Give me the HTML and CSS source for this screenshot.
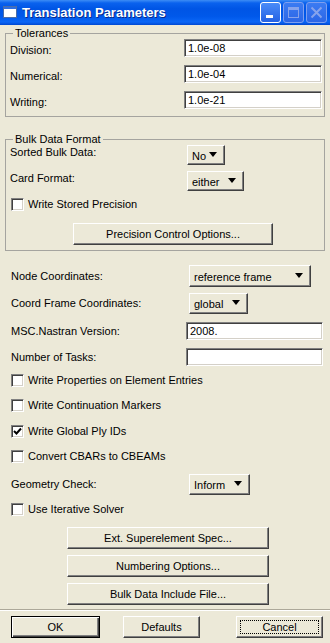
FILE: index.html
```html
<!DOCTYPE html>
<html lang="en">
<head>
    <meta charset="UTF-8">
    <meta name="viewport" content="width=device-width, initial-scale=1.0">
    <title>Translation Parameters</title>
    <link rel="stylesheet" href="styles.css">
</head>
<body>
    <div class="titlebar">
        <svg class="app-icon" width="14" height="12" viewBox="0 0 14 12">
            <rect x="0.5" y="0.5" width="13" height="11" fill="#fff" stroke="#4b6da8"/>
            <rect x="1" y="1" width="12" height="2" fill="#2f6fe0"/>
        </svg>
        <div class="title">Translation Parameters</div>
        <div class="tb-btn min"><span></span></div>
        <div class="tb-btn off">
            <svg width="19" height="19" viewBox="0 0 19 19"><rect x="4.5" y="4.5" width="10" height="10" fill="none" stroke="#86a3ec"/><rect x="5" y="5" width="9" height="2" fill="#86a3ec"/></svg>
        </div>
        <div class="tb-btn off">
            <svg width="19" height="19" viewBox="0 0 19 19"><path d="M4.5 4.5 L14.5 14.5 M14.5 4.5 L4.5 14.5" stroke="#86a3ec" stroke-width="2"/></svg>
        </div>
    </div>

    <fieldset class="group tol">
        <legend>Tolerances</legend>
        <div class="rows">
            <div class="row"><span class="label low">Division:</span><div class="field">1.0e-08</div></div>
            <div class="row"><span class="label low">Numerical:</span><div class="field">1.0e-04</div></div>
            <div class="row"><span class="label low">Writing:</span><div class="field">1.0e-21</div></div>
        </div>
    </fieldset>

    <fieldset class="group bulk">
        <legend>Bulk Data Format</legend>
        <div class="row dd-row"><span class="label high">Sorted Bulk Data:</span><div class="dd w-no">No<i></i></div></div>
        <div class="row dd-row"><span class="label high">Card Format:</span><div class="dd w-either">either<i></i></div></div>
        <div class="row check-row"><div class="check"></div><span>Write Stored Precision</span></div>
        <div class="btn precision">Precision Control Options...</div>
    </fieldset>

    <div class="main">
        <div class="row node"><span class="label">Node Coordinates:</span><div class="dd w-ref">reference frame<i></i></div></div>
        <div class="row coord"><span class="label">Coord Frame Coordinates:</span><div class="dd w-global">global<i></i></div></div>
        <div class="row text-row"><span class="label">MSC.Nastran Version:</span><div class="field">2008.</div></div>
        <div class="row text-row"><span class="label">Number of Tasks:</span><div class="field"></div></div>
        <div class="row check-row c1"><div class="check"></div><span>Write Properties on Element Entries</span></div>
        <div class="row check-row c2"><div class="check"></div><span>Write Continuation Markers</span></div>
        <div class="row check-row c3"><div class="check on"><svg width="9" height="9" viewBox="0 0 9 9"><path d="M1 4 L3.5 6.5 L8 1.5" fill="none" stroke="#000" stroke-width="2"/></svg></div><span>Write Global Ply IDs</span></div>
        <div class="row check-row c2"><div class="check"></div><span>Convert CBARs to CBEAMs</span></div>
        <div class="row geom"><span class="label">Geometry Check:</span><div class="dd w-inform">Inform<i></i></div></div>
        <div class="row check-row c1"><div class="check"></div><span>Use Iterative Solver</span></div>
        <div class="btn wide first">Ext. Superelement Spec...</div>
        <div class="btn wide">Numbering Options...</div>
        <div class="btn wide last">Bulk Data Include File...</div>
    </div>

    <div class="separator"></div>

    <div class="actions">
        <div class="btn ok">OK</div>
        <div class="btn defaults">Defaults</div>
        <div class="btn cancel"><span>Cancel</span></div>
    </div>
</body>
</html>
```

FILE: styles.css
```css
* {
    box-sizing: border-box;
}
body {
    margin: 0;
    width: 330px;
    height: 643px;
    overflow: hidden;
    background: #ece9d8;
    font-family: "Liberation Sans", Arial, sans-serif;
    font-size: 11px;
    line-height: 13px;
    color: #000;
}

/* title bar */
.titlebar {
    height: 25px;
    display: flex;
    align-items: center;
    padding: 0 3px;
    background: linear-gradient(#3d8df5 0%, #0a62ee 12%, #0055e5 35%, #0058ea 65%, #0a66f6 88%, #0047d0 100%);
    color: #fff;
}
.app-icon {
    margin-bottom: 2px;
}
.title {
    flex: 1;
    margin-left: 5px;
    font-size: 13px;
    font-weight: bold;
    text-shadow: 1px 1px #0a2a8a;
}
.tb-btn {
    width: 21px;
    height: 21px;
    margin-left: 2px;
    border: 1px solid #fff;
    border-radius: 3px;
    background: linear-gradient(#4a8cf8, #2462e4);
}
.tb-btn.min {
    display: flex;
    align-items: flex-end;
    padding: 0 0 4px 5px;
}
.tb-btn.min span {
    width: 7px;
    height: 3px;
    background: #fff;
}
.tb-btn.off {
    border-color: #7d9ff0;
    background: linear-gradient(#3b7bf2, #2c66e6);
}

/* group boxes */
.group {
    margin: 2px 5px 0;
    padding: 0 2px 7px 4px;
    border: 1px solid #a5a49f;
    min-width: 0;
}
.group legend {
    padding: 0 2px;
    margin-left: 3px;
    line-height: 12px;
    height: 12px;
}
.bulk {
    margin-top: 16px;
    padding-bottom: 5px;
}
.rows {
    display: flex;
    flex-direction: column;
    gap: 8px;
}

.row {
    display: flex;
    align-items: center;
}
.label {
    width: 174px;
    flex: none;
}
.label.low {
    margin-top: 5px;
}
.label.high {
    margin-bottom: 5px;
}
.tol .row {
    height: 18px;
}

/* controls */
.field {
    width: 138px;
    height: 18px;
    padding: 1px 3px 0;
    background: #fff;
    border: 1px solid;
    border-color: #808080 #fff #fff #808080;
    box-shadow: inset 1px 1px #404040, inset -1px -1px #d4d0c8;
    line-height: 14px;
}
.dd {
    display: flex;
    align-items: center;
    justify-content: space-between;
    height: 20px;
    margin-left: 3px;
    padding: 2px 7px 0 4px;
    border: 1px solid;
    border-color: #fff #404040 #404040 #fff;
    box-shadow: inset -1px -1px #808080;
}
.dd i {
    width: 0;
    height: 0;
    border-left: 4.5px solid transparent;
    border-right: 4.5px solid transparent;
    border-top: 5px solid #000;
    margin-bottom: 4px;
}
.w-no { width: 38px; }
.w-either { width: 57px; }
.w-ref { width: 122px; height: 22px; }
.w-global { width: 59px; height: 21px; }
.w-inform { width: 61px; height: 21px; }

.btn {
    display: flex;
    align-items: center;
    justify-content: center;
    height: 22px;
    border: 1px solid;
    border-color: #fff #404040 #404040 #fff;
    box-shadow: inset -1px -1px #808080;
}
.check {
    width: 13px;
    height: 13px;
    flex: none;
    margin-right: 4px;
    padding: 1px 0 0 1px;
    background: #fff;
    border: 1px solid;
    border-color: #808080 #fff #fff #808080;
    box-shadow: inset 1px 1px #404040, inset -1px -1px #d4d0c8;
}
.check svg {
    display: block;
}
.check-row {
    height: 13px;
}

/* bulk data format group */
.bulk .dd-row {
    margin-top: 6px;
}
.bulk .dd-row:first-of-type {
    margin-top: 0;
}
.bulk .check-row {
    margin: 7px 0 0 1px;
}
.precision {
    width: 200px;
    margin: 12px 0 0 63px;
}

/* main area */
.main {
    padding: 0 7px 0 11px;
}
.main .dd {
    margin-left: 4px;
}
.main .field {
    margin-left: 1px;
}
.node {
    margin-top: 14px;
}
.coord {
    margin-top: 6px;
}
.text-row {
    margin-top: 8px;
}
.c1 { margin-top: 8px; }
.c2 { margin-top: 12px; }
.c3 { margin-top: 13px; }
.geom {
    margin-top: 11px;
}
.wide {
    width: 202px;
    margin: 6px 0 0 56px;
}
.wide.first {
    margin-top: 11px;
}
.wide.last {
    margin-top: 6px;
}

.separator {
    margin-top: 4px;
    height: 2px;
    border-top: 1px solid #aca899;
    border-bottom: 1px solid #fff;
}

.actions {
    display: flex;
    margin-top: 5px;
    padding-left: 11px;
}
.ok {
    width: 89px;
    border: 1px solid #000;
    box-shadow: inset 1px 1px #fff, inset -1px -1px #404040, inset -2px -2px #808080;
}
.defaults {
    width: 77px;
    margin-left: 23px;
}
.cancel {
    width: 87px;
    margin-left: 36px;
    padding: 3px;
}
.cancel span {
    flex: 1;
    align-self: stretch;
    display: flex;
    align-items: center;
    justify-content: center;
    border: 1px dotted #000;
}
```
